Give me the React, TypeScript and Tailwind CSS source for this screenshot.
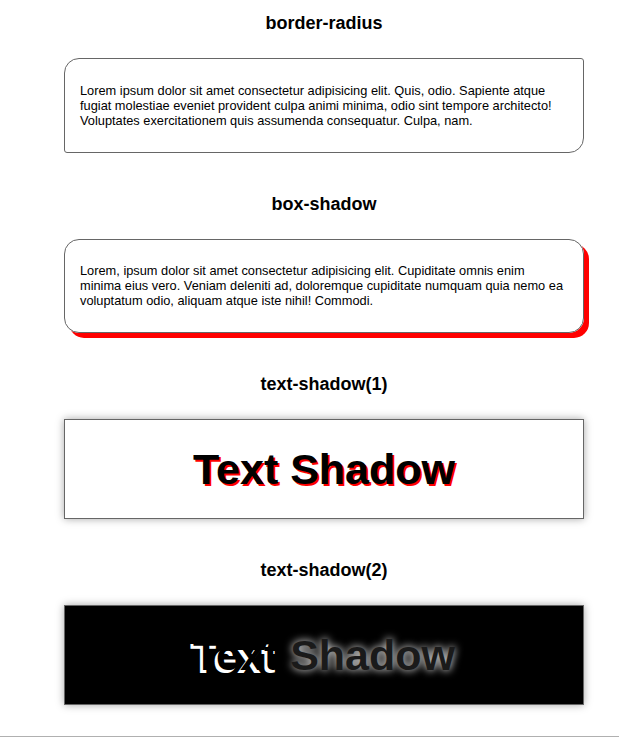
import React from 'react';

const font = { fontFamily: '"Liberation Sans", Arial, sans-serif' };

function Heading({ children, first }: { children: React.ReactNode; first?: boolean }) {
  return (
    <h2 className={`text-center text-[18px] font-bold leading-[22px] text-black mb-[24px] ${first ? '' : 'mt-[40px]'}`}>
      {children}
    </h2>
  );
}

export default function App() {
  return (
    <div className="min-h-[737px] bg-white text-black" style={font}>
      <div className="ml-[64px] w-[520px] pt-[12px]">
        {/* border-radius */}
        <Heading first>border-radius</Heading>
        <div className="border border-[#666] rounded-[15px_3px_15px_3px] px-[15px] py-6">
          <p className="text-[12.8px] leading-[15px]">
            Lorem ipsum dolor sit amet consectetur adipisicing elit. Quis, odio. Sapiente atque fugiat molestiae eveniet
            provident culpa animi minima, odio sint tempore architecto! Voluptates exercitationem quis assumenda
            consequatur. Culpa, nam.
          </p>
        </div>

        {/* box-shadow */}
        <Heading>box-shadow</Heading>
        <div className="border border-[#666] rounded-[15px] px-[15px] pt-[23px] pb-6 shadow-[5px_5px_0_#ff0000]">
          <p className="text-[12.8px] leading-[15px]">
            Lorem, ipsum dolor sit amet consectetur adipisicing elit. Cupiditate omnis enim minima eius vero. Veniam
            deleniti ad, doloremque cupiditate numquam quia nemo ea voluptatum odio, aliquam atque iste nihil! Commodi.
          </p>
        </div>

        {/* text-shadow(1) */}
        <Heading>text-shadow(1)</Heading>
        <div className="h-[100px] border border-[#666] flex items-center justify-center shadow-[0_0_8px_rgba(0,0,0,0.35)]">
          <span className="text-[43px] font-bold leading-none [text-shadow:2px_2px_0_#ff0000]">Text Shadow</span>
        </div>

        {/* text-shadow(2) */}
        <Heading>text-shadow(2)</Heading>
        <div className="h-[100px] border border-[#666] bg-black flex items-center justify-center shadow-[0_0_8px_rgba(0,0,0,0.35)]">
          <span className="text-[43px] font-bold leading-none whitespace-pre">
            <span className="text-black [text-shadow:-3px_3px_0_#ffffff]">Text</span>{' '}
            <span className="text-[#1a1a1a] [text-shadow:0_0_8px_#ffffff]">Shadow</span>
          </span>
        </div>
      </div>
      <div className="mt-[31px] h-[2px] bg-[#b0b0b0]" />
    </div>
  );
}
